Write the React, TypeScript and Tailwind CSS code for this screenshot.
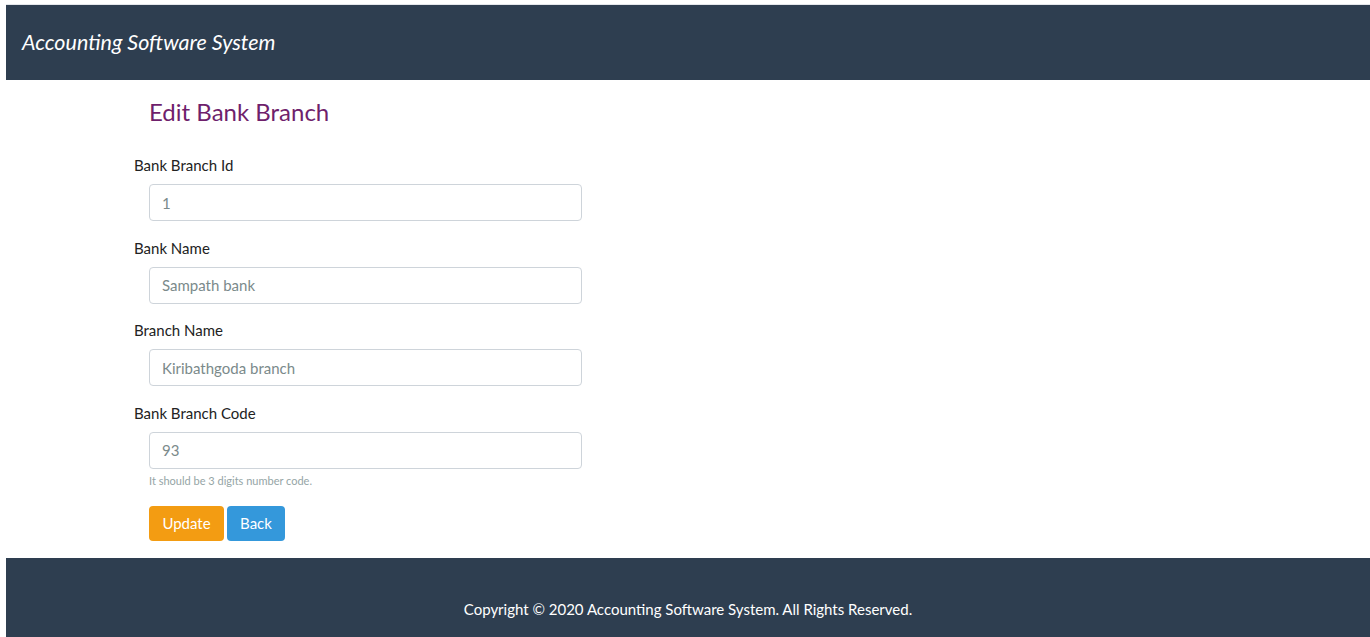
import React from "react";

const fields = [
  { label: "Bank Branch Id", value: "1" },
  { label: "Bank Name", value: "Sampath bank" },
  { label: "Branch Name", value: "Kiribathgoda branch" },
  { label: "Bank Branch Code", value: "93", help: "It should be 3 digits number code." },
];

export default function App() {
  return (
    <div className="bg-white pl-[6px] pt-[4px] font-['Lato',_'Open_Sans',_sans-serif]">
      <header className="flex h-[76px] items-center border-t border-[#e4e7eb] bg-[#2e3e50] pl-[16px]">
        <span className="text-[21.5px] italic leading-none text-white">Accounting Software System</span>
      </header>
      <main className="pb-[17px]">
        <div className="ml-[128px] w-[447px]">
          <h2 className="mt-[17px] pl-[15px] text-[24px] leading-[29px] text-[#6f1f6c]">Edit Bank Branch</h2>
          <form className="mt-[28px]" onSubmit={(e) => e.preventDefault()}>
            {fields.map((f) => (
              <div key={f.label} className={f.help ? "" : "mb-[15.5px]"}>
                <label className="block text-[15px] leading-[22px] text-[#222]">{f.label}</label>
                <div className="mt-[8px] pl-[15px]">
                  <input
                    readOnly
                    value={f.value}
                    className="h-[37px] w-[433px] rounded-[4px] border border-[#ced4da] bg-white px-[12px] text-[15px] text-[#7b8a8b] outline-none"
                  />
                  {f.help && (
                    <div className="mt-[4px] text-[11px] leading-[16px] text-[#95a5a6]">{f.help}</div>
                  )}
                </div>
              </div>
            ))}
            <div className="mt-[17px] flex gap-[3px] pl-[15px]">
              <button className="h-[35px] w-[75px] rounded-[4px] bg-[#f39c12] text-[15px] text-white">Update</button>
              <button className="h-[35px] w-[58px] rounded-[4px] bg-[#3498db] text-[15px] text-white">Back</button>
            </div>
          </form>
        </div>
      </main>
      <footer className="h-[80px] bg-[#2e3e50] pt-[41px] text-center text-[15px] leading-[20px] text-white">
        Copyright © 2020 Accounting Software System. All Rights Reserved.
      </footer>
    </div>
  );
}
